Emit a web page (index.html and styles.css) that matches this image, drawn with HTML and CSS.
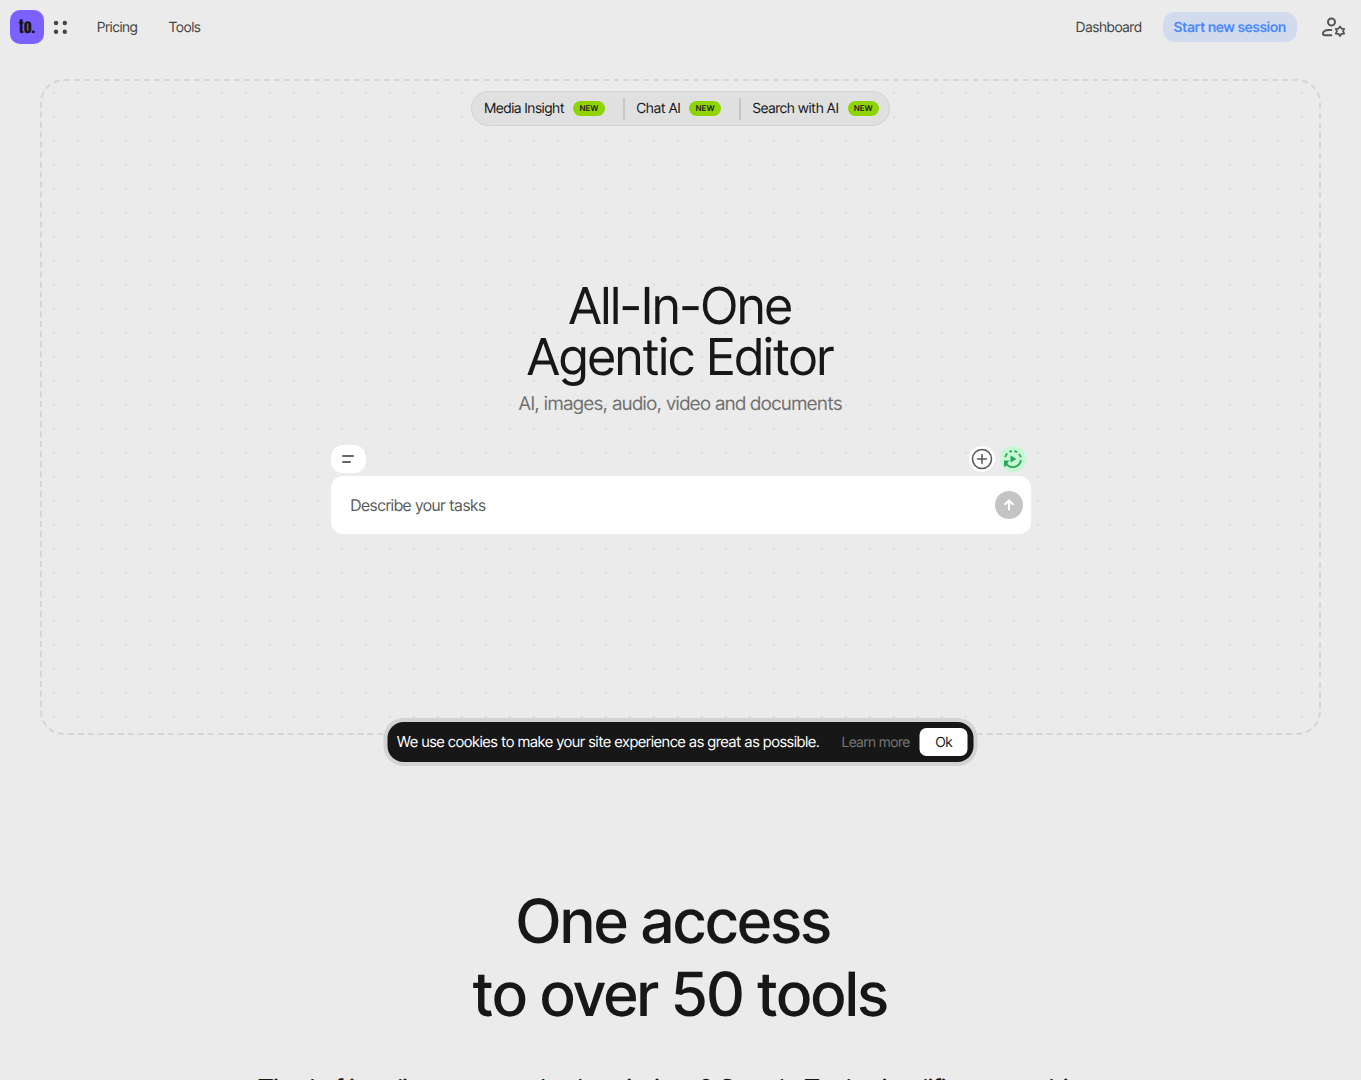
FILE: index.html
```html
<!DOCTYPE html>
<html lang="en">
<head>
<meta charset="utf-8">
<meta name="viewport" content="width=device-width, initial-scale=1">
<title>All-In-One Agentic Editor</title>
<link rel="stylesheet" href="styles.css">
</head>
<body>
<header class="topbar">
  <a class="logo" href="#">to.</a>
  <button class="icon-button apps" type="button" aria-label="Apps">
    <svg width="16" height="16" viewBox="0 0 16 16" fill="#444"><circle cx="3" cy="4" r="2.2"/><circle cx="11.8" cy="4" r="2.2"/><circle cx="3" cy="12.7" r="2.2"/><circle cx="11.8" cy="12.7" r="2.2"/></svg>
  </button>
  <nav class="nav">
    <a href="#">Pricing</a>
    <a href="#">Tools</a>
  </nav>
  <div class="account">
    <a href="#">Dashboard</a>
    <button class="session" type="button">Start new session</button>
    <button class="icon-button" type="button" aria-label="Account settings">
      <svg width="26" height="22" viewBox="0 0 26 22" fill="none" stroke="#555" stroke-width="2" stroke-linecap="round" stroke-linejoin="round">
        <circle cx="10.5" cy="6" r="3.5"/>
        <path d="M10.3 14H7.5C4 14 2 15.8 2 17.6c0 1.2.7 1.6 1.6 1.6h6.7"/>
        <path stroke-width="1.8" d="M19 10.4l1.5 2.2 2.7.2-1.2 2.4 1.2 2.4-2.7.2-1.5 2.2-1.5-2.2-2.7-.2 1.2-2.4-1.2-2.4 2.7-.2z"/>
      </svg>
    </button>
  </div>
</header>
<main>
  <section class="hero">
    <nav class="features">
      <a href="#">Media Insight <span class="badge">NEW</span></a>
      <a href="#">Chat AI <span class="badge">NEW</span></a>
      <a href="#">Search with AI <span class="badge">NEW</span></a>
    </nav>
    <div class="intro">
      <h1>All-In-One<br>Agentic Editor</h1>
      <p>AI, images, audio, video and documents</p>
    </div>
    <form class="composer">
      <div class="tools">
        <button class="menu" type="button" aria-label="Menu">
          <svg width="14" height="10" viewBox="0 0 14 10" stroke="#666" stroke-width="2" stroke-linecap="round"><path d="M2 2h10M2 8h7"/></svg>
        </button>
        <button class="round add" type="button" aria-label="Add">
          <svg width="22" height="22" viewBox="0 0 22 22" fill="none" stroke="#555" stroke-width="1.5" stroke-linecap="round"><circle cx="11" cy="11" r="9.5"/><path d="M11 6.5v9M6.5 11h9"/></svg>
        </button>
        <button class="round auto" type="button" aria-label="Auto run">
          <svg width="20" height="20" viewBox="0 0 20 20" fill="none" stroke="#27a65a" stroke-width="1.8">
            <path d="M2.2 8.1A8 8 0 0 1 4.3 4.4M6.4 2.9A8 8 0 0 1 9 2.1M11.3 2.1A8 8 0 0 1 14.2 3.3M16 5A8 8 0 0 1 17.7 8.2"/>
            <path d="M17.9 11.2A8 8 0 0 1 3.3 14.4"/>
            <path d="M7.5 6.5v7l6-3.5z" fill="#27a65a" stroke="none"/>
            <path d="M1 11.6h5.6L4.8 13.4 2.8 17.6H1z" fill="#27a65a" stroke="none"/>
          </svg>
        </button>
      </div>
      <div class="prompt">
        <input type="text" aria-label="Describe your tasks" placeholder="Describe your tasks">
        <button class="send" type="submit" aria-label="Send">
          <svg width="12" height="12" viewBox="0 0 12 12" fill="none" stroke="#fff" stroke-width="2" stroke-linecap="round" stroke-linejoin="round"><path d="M6 10.5V2M2.2 5.3L6 1.5l3.8 3.8"/></svg>
        </button>
      </div>
    </form>
    <aside class="cookies" aria-label="Cookies">
      <span>We use cookies to make your site experience as great as possible.</span>
      <a href="#">Learn more</a>
      <button type="button">Ok</button>
    </aside>
  </section>
  <section class="access">
    <h2>One access&nbsp;<br>to over 50 tools</h2>
    <p>Tired of juggling apps and subscriptions? Google Tools simplifies everything.</p>
  </section>
</main>
</body>
</html>
```
FILE: styles.css
```css
* { box-sizing: border-box; }
body {
  margin: 0;
  background: #ebebeb;
  color: #171717;
  font-family: "Inter Tight", Inter, "Liberation Sans", sans-serif;
  font-size: 14px;
  line-height: 21px;
  text-rendering: geometricPrecision;
}
a { color: inherit; text-decoration: none; }
button { border: 0; padding: 0; font: inherit; cursor: pointer; }
button, input { text-rendering: inherit; }
svg { display: block; }
h1, h2, p { margin: 0; }

.topbar {
  display: flex;
  align-items: center;
  height: 54px;
  padding: 0 14px 0 10px;
  color: #444;
}
.logo {
  display: grid;
  place-items: center;
  width: 34px;
  height: 34px;
  border-radius: 10px;
  background: #7b61ff;
  color: #171717;
  font: 400 16px/20px Anton, Oswald, "Roboto Condensed", "Liberation Sans Narrow", Roboto, sans-serif;
}
.icon-button { background: none; }
.apps { margin-left: 9px; }
.nav { display: flex; gap: 31px; margin-left: 28px; }
.account { display: flex; align-items: center; gap: 21px; margin-left: auto; }
.account .icon-button { margin-left: 3px; }
.session {
  height: 30px;
  padding: 0 11px;
  border-radius: 12px;
  background: #d2dbee;
  color: #4b89ff;
  font-weight: 600;
}

.hero {
  position: relative;
  display: flex;
  flex-direction: column;
  align-items: center;
  min-height: 656px;
  margin: 25px 40px 0;
  padding: 10px;
  border: 2px dashed #d6d6d6;
  border-radius: 24px;
  background: conic-gradient(from 270deg at 2px 2px, #dadada 90deg, transparent 0) 11px 11px / 24px 24px;
}
.features {
  display: flex;
  align-items: center;
  height: 35px;
  padding: 0 10px 0 12px;
  border: 1px solid #d3d3d3;
  border-radius: 18px;
  background: #e0e0e0;
  line-height: 22px;
}
.features a { display: flex; align-items: center; gap: 9px; }
.features a + a {
  margin-left: 18px;
  padding-left: 12px;
  border-left: 2px solid #c6c6c6;
}
.badge {
  padding: 0 6px;
  border-radius: 8px;
  background: #8fd400;
  font-family: Inter, sans-serif;
  font-size: 8px;
  font-weight: 600;
  line-height: 15px;
}
.intro { margin-top: 155px; text-align: center; }
h1 { font-size: 51px; font-weight: 400; line-height: 51px; }
.intro p { margin-top: 7px; color: #707070; font-size: 19px; line-height: 28px; }

.composer { width: 100%; max-width: 700px; margin-top: 27px; }
.tools { display: flex; align-items: center; gap: 5px; padding-right: 5px; }
.menu {
  display: grid;
  place-items: center;
  width: 35px;
  height: 28px;
  border-radius: 12px;
  background: #fff;
}
.round { display: grid; place-items: center; width: 26px; height: 26px; border-radius: 50%; }
.add { margin-left: auto; background: #fff; }
.auto { background: #c5f8d3; }
.prompt {
  display: flex;
  align-items: center;
  height: 58px;
  margin-top: 3px;
  padding: 0 8px 0 20px;
  border-radius: 12px;
  background: #fff;
}
.prompt input {
  flex: 1;
  min-width: 0;
  padding: 0;
  border: 0;
  outline: 0;
  background: none;
  font: inherit;
  font-size: 16px;
  line-height: 24px;
}
.prompt input::placeholder { color: #5c5c5c; opacity: 1; }
.send { display: grid; place-items: center; width: 28px; height: 28px; border-radius: 50%; background: #c4c4c4; }

.cookies {
  position: absolute;
  bottom: -29px;
  left: 50%;
  display: flex;
  align-items: center;
  height: 40px;
  padding: 0 6px 0 10px;
  border-radius: 16px;
  background: #171717;
  box-shadow: 0 0 0 4px #d3d3d3;
  color: #fff;
  font-size: 15px;
  line-height: 20px;
  white-space: nowrap;
  transform: translateX(-50%);
}
.cookies a { margin: 0 10px 0 22px; color: #777; font-size: 14px; line-height: 21px; }
.cookies button { width: 48px; height: 28px; border-radius: 7px; background: #fff; color: #171717; font-size: 14px; line-height: 21px; }

.access { padding: 150px 20px 60px; text-align: center; }
h2 { font-size: 61px; font-weight: 500; line-height: 73px; }
.access p { margin-top: 42px; font-size: 26px; line-height: 34px; }
```
